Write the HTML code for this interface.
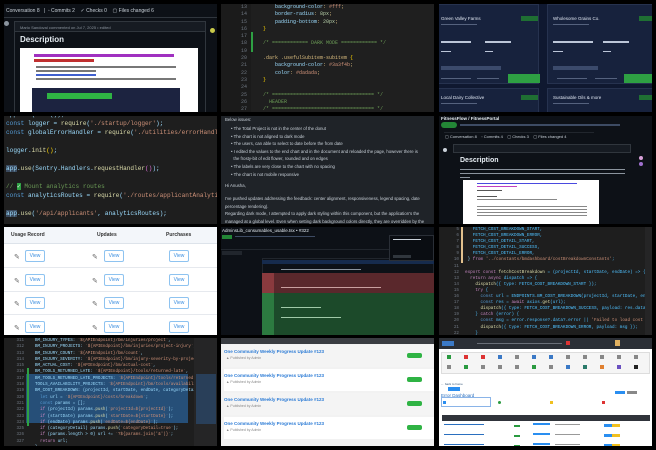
<!DOCTYPE html>
<html><head><meta charset="utf-8"><style>
*{margin:0;padding:0;box-sizing:border-box}
body{width:656px;height:450px;background:#000;position:relative;overflow:hidden;font-family:"Liberation Sans",sans-serif}
.t{position:absolute;overflow:hidden;width:213px;height:108px}
.c1{left:4px}.c2{left:221px}.c3{left:439px}
.r1{top:4px}.r2{top:116px}.r3{top:227px}.r4{top:338px;height:108px}
.a{position:absolute}
.mono{font-family:"Liberation Mono",monospace}
.ln{position:absolute;height:2px}
</style></head><body>

<!-- T1 GitHub PR -->
<div class="t c1 r1" style="background:#0d1117">
 <div class="a" style="left:0;top:0;width:213px;height:14px;border-bottom:1px solid #30363d;font-size:5px;color:#c9d1d9;line-height:14px;padding-left:2px;white-space:nowrap">Conversation 8 &nbsp;&nbsp;|&nbsp; ◦ Commits 2 &nbsp;&nbsp; ✓ Checks 0 &nbsp;&nbsp; ▢ Files changed 6</div>
 <div class="a" style="left:0;top:17px;width:5px;height:5px;border-radius:50%;background:#8b949e"></div>
 <div class="a" style="left:10px;top:17px;width:192px;height:95px;border:1px solid #30363d;background:#0d1117">
  <div style="height:10px;background:#161b22;border-bottom:1px solid #30363d;font-size:4px;color:#8b949e;padding:3px 5px">Mario Sandoval commented on Jul 7, 2025 • edited</div>
  <div style="font-size:8px;color:#e6edf3;padding:3px 5px;font-weight:bold">Description</div>
  <div class="a" style="left:5px;top:26px;width:178px;height:70px;background:#fff">
   <div class="a" style="left:14px;top:6px;width:140px;height:3px;background:#a030c0"></div>
   <div class="a" style="left:14px;top:11px;width:60px;height:3px;background:#c03030"></div>
   <div class="a" style="left:16px;top:18px;width:140px;height:2px;background:#777"></div>
   <div class="a" style="left:16px;top:22px;width:60px;height:2px;background:#777"></div>
   <div class="a" style="left:16px;top:26px;width:60px;height:2px;background:#4060d0"></div>
   <div class="a" style="left:16px;top:30px;width:140px;height:2px;background:#777"></div>
   <div class="a" style="left:12px;top:40px;width:148px;height:30px;background:#1c2340"></div>
   <div class="a" style="left:27px;top:45px;width:65px;height:6px;background:#2fb344"></div>
  </div>
 </div>
 <div class="a" style="left:206px;top:24px;width:5px;height:5px;border-radius:50%;background:#c9c94a"></div>
</div>

<!-- T2 CSS editor -->
<div class="t c2 r1 mono" style="background:#1f1f1f;font-size:5px;line-height:7.3px;color:#9cdcfe">
 <div class="a" style="left:0;top:0;width:30px;height:108px;background:#1b1b1b;color:#6e7681;text-align:right;padding-right:4px">13<br>14<br>15<br>16<br>17<br>18<br>19<br>20<br>21<br>22<br>23<br>24<br>25<br>26<br>27<br>28</div>
 <div class="a" style="left:30px;top:28px;width:2px;height:20px;background:#2ea043"></div>
 <div class="a" style="left:42px;top:0;white-space:pre;color:#d7ba7d">    <span style="color:#9cdcfe">background-color</span>: <span style="color:#ce9178">#fff</span>;
    <span style="color:#9cdcfe">border-radius</span>: <span style="color:#b5cea8">8px</span>;
    <span style="color:#9cdcfe">padding-bottom</span>: <span style="color:#b5cea8">20px</span>;
<span style="color:#ffd700">}</span>

<span style="color:#6a9955">/* ============ DARK MODE ============ */</span>

.dark .usefulSubitem-subitem <span style="color:#ffd700">{</span>
    <span style="color:#9cdcfe">background-color</span>: <span style="color:#ce9178">#3a3f4b</span>;
    <span style="color:#9cdcfe">color</span>: <span style="color:#ce9178">#dadada</span>;
<span style="color:#ffd700">}</span>

<span style="color:#6a9955">/* ================================== */</span>
  <span style="color:#6a9955">HEADER</span>
<span style="color:#6a9955">/* ================================== */</span></div>
</div>

<!-- T3 cards -->
<div class="t c3 r1" style="background:#0f1830">
 <div class="a" style="left:-4px;top:0;width:104px;height:80px;background:#17223d;border:1px solid #26324f"></div>
 <div class="a" style="left:108px;top:0;width:110px;height:80px;background:#17223d;border:1px solid #26324f"></div>
 <div class="a" style="left:-4px;top:84px;width:104px;height:30px;background:#17223d;border:1px solid #26324f"></div>
 <div class="a" style="left:108px;top:84px;width:110px;height:30px;background:#17223d;border:1px solid #26324f"></div>
 <div class="a" style="font-size:4.5px;color:#dfe6f2;left:2px;top:12px">Green Valley Farms</div>
 <div class="a" style="font-size:4.5px;color:#dfe6f2;left:114px;top:12px">Wholesome Grains Co.</div>
 <div class="a" style="font-size:4.5px;color:#dfe6f2;left:2px;top:91px">Local Dairy Collective</div>
 <div class="a" style="font-size:4.5px;color:#dfe6f2;left:114px;top:91px">Sustainable Oils &amp; more</div>
 <div class="ln" style="left:2px;top:20px;width:36px;background:#55627e;height:1px"></div>
 <div class="ln" style="left:114px;top:20px;width:36px;background:#55627e;height:1px"></div>
 <div class="ln" style="left:2px;top:99px;width:36px;background:#55627e;height:1px"></div>
 <div class="ln" style="left:114px;top:99px;width:36px;background:#55627e;height:1px"></div>
 <div class="a" style="left:82px;top:12px;width:17px;height:5px;background:#1f6f33"></div>
 <div class="a" style="left:200px;top:12px;width:17px;height:5px;background:#1f6f33"></div>
 <div class="a" style="left:82px;top:91px;width:17px;height:5px;background:#1f6f33"></div>
 <div class="a" style="left:200px;top:91px;width:17px;height:5px;background:#1f6f33"></div>
 <div class="a" style="left:69px;top:70px;width:32px;height:9px;background:#2ea043"></div>
 <div class="a" style="left:185px;top:70px;width:32px;height:9px;background:#2ea043"></div>
 <div class="ln" style="left:2px;top:74px;width:30px;background:#55627e;height:1px"></div>
 <div class="ln" style="left:38px;top:74px;width:22px;background:#55627e;height:1px"></div>
 <div class="ln" style="left:118px;top:74px;width:30px;background:#55627e;height:1px"></div>
 <div class="ln" style="left:156px;top:74px;width:22px;background:#55627e;height:1px"></div>
 <div class="ln" style="left:2px;top:37px;width:30px;background:#bcc6d8"></div>
 <div class="ln" style="left:46px;top:37px;width:26px;background:#bcc6d8"></div>
 <div class="ln" style="left:114px;top:37px;width:40px;background:#bcc6d8"></div>
 <div class="ln" style="left:164px;top:37px;width:26px;background:#bcc6d8"></div>
 <div class="ln" style="left:2px;top:47px;width:10px;background:#bcc6d8;height:1px"></div>
 <div class="ln" style="left:46px;top:47px;width:8px;background:#bcc6d8;height:1px"></div>
 <div class="ln" style="left:114px;top:47px;width:10px;background:#bcc6d8;height:1px"></div>
 <div class="ln" style="left:164px;top:47px;width:8px;background:#bcc6d8;height:1px"></div>
 <div class="ln" style="left:2px;top:62px;width:60px;background:#3b4a6b;height:4px"></div>
 <div class="ln" style="left:114px;top:62px;width:45px;background:#3b4a6b;height:4px"></div>
</div>

<!-- T4 JS code -->
<div class="t c1 r2 mono" style="background:#1e1e1e;font-size:6.1px;line-height:9px;color:#9cdcfe"><div class="a" style="left:2px;top:-6.5px;white-space:pre">app.<span style="color:#dcdcaa">use</span>(cors());
<span style="color:#569cd6">const</span> logger = <span style="color:#dcdcaa">require</span>(<span style="color:#ce9178">'./startup/logger'</span>);
<span style="color:#569cd6">const</span> globalErrorHandler = <span style="color:#dcdcaa">require</span>(<span style="color:#ce9178">'./utilities/errorHandler'</span>);

logger.<span style="color:#dcdcaa">init</span><span style="color:#ffd700">()</span>;

<span style="background:#3a4a5e">app</span>.<span style="color:#dcdcaa">use</span>(Sentry.Handlers.<span style="color:#dcdcaa">requestHandler</span><span style="color:#da70d6">()</span>);

<span style="color:#6a9955">// <span style="background:#2ea043;color:#fff">✓</span> Mount analytics routes</span>
<span style="color:#569cd6">const</span> analyticsRoutes = <span style="color:#dcdcaa">require</span>(<span style="color:#ce9178">'./routes/applicantAnalytics'</span>);

<span style="background:#3a4a5e">app</span>.<span style="color:#dcdcaa">use</span>(<span style="color:#ce9178">'/api/applicants'</span>, analyticsRoutes);</div></div>

<!-- T5 text -->
<div class="t c2 r2" style="background:#1f2328;font-size:4.3px;color:#c9d1d9;line-height:7.6px">
 <div class="a" style="left:4px;top:0">Below issues:</div>
 <div class="a" style="left:10px;top:9px;white-space:nowrap">• The Total Project is not in the center of the donut<br>• The chart is not aligned to dark mode<br>• The users, can able to select to date before the from date<br>• I edited the values to the end chart and in the document and reloaded the page, however there is<br>&nbsp;&nbsp;the frosty-bit of edit flower, rounded and on edges<br>• The labels are very close to the chart with no spacing<br>• The chart is not mobile responsive</div>
 <div class="a" style="left:4px;top:66px">Hi Anusha,</div>
 <div class="a" style="left:4px;top:79px;white-space:nowrap">I've pushed updates addressing the feedback: center alignment, responsiveness, legend spacing, date<br>percentage rendering).<br>Regarding dark mode, I attempted to apply dark styling within this component, but the application's the<br>managed at a global level. Even when setting dark background colors directly, they are overridden by the</div>
</div>

<!-- T6 GitHub PR -->
<div class="t c3 r2" style="background:#0d1117">
 <div class="a" style="left:2px;top:0;font-size:4.5px;color:#e6edf3;font-weight:bold">FitnessFlow / FitnessPortal</div>
 <div class="a" style="left:2px;top:6px;width:16px;height:6px;background:#238636;border-radius:3px"></div>
 <div class="ln" style="left:21px;top:8px;width:160px;background:#3d4b63"></div>
 <div class="a" style="left:5px;top:16px;width:150px;height:0;border-top:1px solid #21262d"></div>
 <div class="a" style="left:6px;top:18px;font-size:4px;color:#c9d1d9;white-space:nowrap">▢ Conversation 8 &nbsp;&nbsp; ◦ Commits 4 &nbsp;&nbsp; ▢ Checks 3 &nbsp;&nbsp; ▢ Files changed 4</div>
 <div class="a" style="left:4px;top:32px;width:4px;height:4px;background:#c9d1d9;border-radius:50%"></div>
 <div class="a" style="left:14px;top:28px;width:178px;height:9px;background:#161b22;border:1px solid #30363d"></div>
 <div class="a" style="left:21px;top:41px;font-size:7px;color:#e6edf3;font-weight:bold">Description</div>
 <div class="ln" style="left:21px;top:53px;width:165px;background:#8b949e;height:1px"></div>
 <div class="ln" style="left:21px;top:57px;width:165px;background:#8b949e;height:1px"></div>
 <div class="ln" style="left:21px;top:61px;width:10px;background:#8b949e;height:1px"></div>
 <div class="a" style="left:24px;top:64px;width:136px;height:44px;background:#fff">
  <div class="ln" style="left:14px;top:3px;width:100px;background:#4a4adf;height:1px"></div>
  <div class="ln" style="left:14px;top:6px;width:40px;background:#c040c0;height:1px"></div>
  <div class="ln" style="left:14px;top:10px;width:25px;background:#555;height:1px"></div>
  <div class="ln" style="left:14px;top:16px;width:20px;background:#555;height:1px"></div>
  <div class="ln" style="left:14px;top:19px;width:80px;background:#888;height:1px"></div>
  <div class="ln" style="left:14px;top:26px;width:110px;background:#888;height:1px"></div>
  <div class="ln" style="left:14px;top:29px;width:110px;background:#888;height:1px"></div>
  <div class="ln" style="left:14px;top:32px;width:110px;background:#888;height:1px"></div>
  <div class="ln" style="left:14px;top:35px;width:110px;background:#888;height:1px"></div>
 </div>
 <div class="a" style="left:200px;top:40px;width:4px;height:4px;background:#d8a0d8;border-radius:50%"></div>
 <div class="a" style="left:200px;top:46px;width:4px;height:4px;background:#a070d0;border-radius:50%"></div>
</div>

<!-- T7 table -->
<div class="t c1 r3" style="background:#fff;font-size:5px;color:#333">
 <div class="a" style="left:0;top:0;width:213px;height:17px;background:#f3f6fa;border-bottom:1px solid #dde3ea;font-weight:bold">
  <span class="a" style="left:7px;top:5px">Usage Record</span><span class="a" style="left:93px;top:5px">Updates</span><span class="a" style="left:162px;top:5px">Purchases</span>
 </div>
 <div id="rows"></div>
</div>

<!-- T8 diff -->
<div class="t c2 r3" style="background:#0d1117">
 <div class="a" style="left:1px;top:1px;font-size:4.5px;color:#e6edf3">AdminsLib_consumables_usable.tsx • #322</div>
 <div class="a" style="left:1px;top:8px;width:10px;height:4px;background:#238636"></div>
 <div class="ln" style="left:14px;top:9px;width:80px;background:#3d4b63;height:1px"></div>
 <div class="a" style="left:0;top:22px;width:213px;height:0;border-top:1px solid #21262d"></div>
 <div class="a" style="left:1px;top:24px;width:20px;height:4px;background:#21262d"></div>
 <div class="a" style="left:41px;top:31px;width:172px;height:77px;border:1px solid #21262d"></div>
 <div class="a" style="left:41px;top:33px;width:172px;height:4px;background:#162b4d"></div>
 <div class="a" style="left:41px;top:46px;width:172px;height:20px;background:#5a282c"></div>
 <div class="a" style="left:41px;top:46px;width:12px;height:20px;background:#8a3a3e"></div>
 <div class="a" style="left:41px;top:66px;width:172px;height:42px;background:#1c4a2a"></div>
 <div class="a" style="left:41px;top:66px;width:12px;height:42px;background:#2c7a40"></div>
 <div class="ln" style="left:60px;top:42px;width:80px;background:#8b949e;height:1px"></div>
 <div class="ln" style="left:60px;top:60px;width:100px;background:#c9a0a0;height:1px"></div>
 <div class="ln" style="left:60px;top:80px;width:40px;background:#a0c9a8;height:1px"></div>
 <div class="ln" style="left:60px;top:90px;width:60px;background:#a0c9a8;height:1px"></div>
 <div class="a" style="left:168px;top:8px;width:45px;height:26px;background:#0a0d12;border:1px solid #2a2f37"></div>
 <div class="ln" style="left:172px;top:12px;width:28px;background:#c9d1d9;height:1px"></div>
 <div class="ln" style="left:172px;top:28px;width:18px;background:#30363d;height:3px"></div>
</div>

<!-- T9 VS Code JS -->
<div class="t c3 r3 mono" style="background:#1e1e1e;font-size:4.3px;line-height:6.1px;color:#9cdcfe">
 <div class="a" style="left:0;top:0;width:20px;height:108px;color:#6e7681;text-align:right;white-space:pre">5
6
7
8
9
10
11
12
13
14
15
16
17
18
19
20
21
22</div>
 <div class="a" style="left:22px;top:0;width:2px;height:36px;background:#e2c08d"></div>
 <div class="a" style="left:26px;top:0;white-space:pre;color:#4fc1ff">   FETCH_COST_BREAKDOWN_START,
   FETCH_COST_BREAKDOWN_ERROR,
   FETCH_COST_DETAIL_START,
   FETCH_COST_DETAIL_SUCCESS,
   FETCH_COST_DETAIL_ERROR,
 <span style="color:#9cdcfe">} </span><span style="color:#c586c0">from</span> <span style="color:#ce9178">'../constants/bmdashboard/costBreakdownConstants'</span>;

<span style="color:#c586c0">export const</span> <span style="color:#dcdcaa">fetchCostBreakdown</span> = (projectId, startDate, endDate) =&gt; {
  <span style="color:#c586c0">return async</span> dispatch =&gt; {
    <span style="color:#dcdcaa">dispatch</span>({ type: FETCH_COST_BREAKDOWN_START });
    <span style="color:#c586c0">try</span> {
      <span style="color:#569cd6">const</span> url = ENDPOINTS.BM_COST_BREAKDOWN(projectId, startDate, endDate);
      <span style="color:#569cd6">const</span> res = <span style="color:#c586c0">await</span> axios.<span style="color:#dcdcaa">get</span>(url);
      <span style="color:#dcdcaa">dispatch</span>({ type: FETCH_COST_BREAKDOWN_SUCCESS, payload: res.data });
    } <span style="color:#c586c0">catch</span> (error) {
      <span style="color:#569cd6">const</span> msg = error.response?.data?.error || <span style="color:#ce9178">'Failed to load cost breakdown'</span>;
      <span style="color:#dcdcaa">dispatch</span>({ type: FETCH_COST_BREAKDOWN_ERROR, payload: msg });
    }
  };
};</div>
 <div class="a" style="left:206px;top:0;width:7px;height:108px;background:#252526"></div>
</div>

<!-- T10 code with selection -->
<div class="t c1 r4 mono" style="background:#1e1e1e;font-size:4.2px;line-height:6.3px;color:#9cdcfe">
 <div class="a" style="left:0;top:0;width:20px;height:108px;color:#6e7681;text-align:right;white-space:pre">311
312
313
314
315
316
317
318
319
320
321
322
323
324
325
326
327
328
329
330</div>
 <div class="a" style="left:22px;top:36px;width:162px;height:49px;background:#264f78"></div>
 <div class="a" style="left:23px;top:30px;width:2px;height:58px;background:#2ea043"></div>
 <div class="a" style="left:26px;top:0;white-space:pre">  BM_INJURY_TYPES: <span style="color:#ce9178">`${APIEndpoint}/bm/injuries/project`</span>,
  BM_INJURY_PROJECTS: <span style="color:#ce9178">`${APIEndpoint}/bm/injuries/project-injury`</span>,
  BM_INJURY_COUNT: <span style="color:#ce9178">`${APIEndpoint}/bm/count`</span>,
  BM_INJURY_SEVERITY: <span style="color:#ce9178">`${APIEndpoint}/bm/injury-severity-by-project`</span>,
  BM_ACTUAL_COST: <span style="color:#ce9178">`${APIEndpoint}/bm/actual-cost`</span>,
  BM_TOOLS_RETURNED_LATE: <span style="color:#ce9178">`${APIEndpoint}/tools/returned-late`</span>,
  BM_TOOLS_RETURNED_LATE_PROJECTS: <span style="color:#ce9178">`${APIEndpoint}/tools/returned-late/projects`</span>,
  TOOLS_AVAILABILITY_PROJECTS: <span style="color:#ce9178">`${APIEndpoint}/bm/tools/availability`</span>,
  BM_COST_BREAKDOWN: (projectId, startDate, endDate, categoryDetail) =&gt; {
    <span style="color:#569cd6">let</span> url = <span style="color:#ce9178">`${APIEndpoint}/costs/breakdown`</span>;
    <span style="color:#569cd6">const</span> params = [];
    <span style="color:#c586c0">if</span> (projectId) params.<span style="color:#dcdcaa">push</span>(<span style="color:#ce9178">`projectId=${projectId}`</span>);
    <span style="color:#c586c0">if</span> (startDate) params.<span style="color:#dcdcaa">push</span>(<span style="color:#ce9178">`startDate=${startDate}`</span>);
    <span style="color:#c586c0">if</span> (endDate) params.<span style="color:#dcdcaa">push</span>(<span style="color:#ce9178">`endDate=${endDate}`</span>);
    <span style="color:#c586c0">if</span> (categoryDetail) params.<span style="color:#dcdcaa">push</span>(<span style="color:#ce9178">`categoryDetail=true`</span>);
    <span style="color:#c586c0">if</span> (params.length &gt; 0) url += <span style="color:#ce9178">`?${params.join('&amp;')}`</span>;
    <span style="color:#c586c0">return</span> url;
  },
  TOOLS_AVAILABILITY_BY_PROJECT: (projectId, startDate, endDate) =&gt; {
    <span style="color:#569cd6">let</span> url = <span style="color:#ce9178">`${APIEndpoint}/tools/availability`</span>;</div>
 <div class="a" style="left:190px;top:0;width:23px;height:108px;background:#252526"></div>
 <div class="a" style="left:192px;top:36px;width:20px;height:50px;background:#2b4a6f;opacity:.7"></div>
</div>

<!-- T11 list -->
<div class="t c2 r4" style="background:#f2f2f2">
 <div class="a" style="left:0;top:0;width:213px;height:6px;background:#3a3d42"></div>
 <div id="t11"></div>
</div>

<!-- T12 admin -->
<div class="t c3 r4" style="background:#fff">
 <div class="a" style="left:0;top:0;width:213px;height:11px;background:#2b2f36"></div>
 <div class="a" style="left:3px;top:3px;width:12px;height:5px;background:#3b79c6"></div>
 <div class="ln" style="left:38px;top:5px;width:85px;background:#6a6f78;height:1px"></div>
 <div class="a" style="left:127px;top:3px;width:4px;height:4px;background:#d33"></div>
 <div class="a" style="left:176px;top:2px;width:5px;height:6px;background:#e0b060"></div>
 <div class="a" style="left:2px;top:14px;width:209px;height:22px;background:#f5f5f5;border:1px solid #ddd"></div>
 <div id="icons"></div>
 <div class="a" style="left:2px;top:44px;font-size:3px;color:#357">← back to home</div>
 <div class="a" style="left:9px;top:49px;width:12px;height:4px;background:#2a8ef0"></div>
 <div class="a" style="left:2px;top:55px;font-size:4.5px;color:#2a6fbf">Error Dashboard</div>
 <div class="a" style="left:176px;top:53px;width:10px;height:3px;background:#2a8ef0"></div>
 <div class="a" style="left:188px;top:53px;width:10px;height:3px;background:#888"></div>
 <div class="a" style="left:2px;top:59px;width:50px;height:10px;border:1px solid #8ab4e8"></div>
 <div class="a" style="left:4px;top:63px;width:3px;height:3px;background:#2a8ef0"></div>
 <div class="a" style="left:59px;top:63px;width:3px;height:3px;background:#2a9a40;border-radius:50%"></div>
 <div class="a" style="left:111px;top:63px;width:3px;height:3px;background:#f0c020"></div>
 <div class="a" style="left:163px;top:63px;width:3px;height:3px;background:#d33"></div>
 <div class="a" style="left:3px;top:77px;width:208px;height:6px;background:#30343b"></div>
 <div id="t12r"></div>
</div>

<script>
(function(){
 var h='';
 for(var i=0;i<4;i++){var y=18+i*23.5;
  h+='<div class="a" style="left:0;top:'+(y+22)+'px;width:213px;height:1px;background:#e6e9ee"></div>';
  [[10,21],[88,100],[null,165]].forEach(function(p){
   if(p[0]!==null)h+='<div class="a" style="left:'+p[0]+'px;top:'+(y+8)+'px;font-size:7px;color:#666">✎</div>';
   h+='<div class="a" style="left:'+p[1]+'px;top:'+(y+5)+'px;width:20px;height:12px;border:1px solid #8ec3f0;border-radius:2px;font-size:5px;color:#3a8ee0;text-align:center;line-height:10px">View</div>';
  });}
 document.getElementById('rows').innerHTML=h;
 h='';
 for(var i=0;i<4;i++){var y=10+i*24;
  h+='<div class="a" style="left:3px;top:'+(y-3)+'px;width:210px;height:22px;background:'+(i%2?'#fff':'#f4f4f4')+'"></div>';
  h+='<div class="a" style="left:3px;top:'+(y+1)+'px;font-size:4.5px;color:#2a7ad5;font-weight:bold;white-space:nowrap">One Community Weekly Progress Update #123</div>';
  h+='<div class="a" style="left:5px;top:'+(y+8)+'px;font-size:3.5px;color:#888">▲ Published by Admin</div>';
  h+='<div class="a" style="left:186px;top:'+(y+5)+'px;width:15px;height:5px;background:#2fb344;border-radius:2px"></div>';}
 document.getElementById('t11').innerHTML=h;
 h='';var cols=['#2a9a40','#d33','#d33','#3b79c6','#888','#3b79c6','#3b79c6','#888','#888','#888','#888','#888'];
 for(var i=0;i<12;i++){h+='<div class="a" style="left:'+(8+i*17)+'px;top:17px;width:4px;height:4px;background:'+cols[i]+'"></div>';
  h+='<div class="a" style="left:'+(8+i*17)+'px;top:27px;width:4px;height:4px;background:'+['#888','#2a9a40','#888','#888','#888','#2a9a40','#888','#3b79c6','#2a7a6a','#e08030','#6a50c0','#222'][i]+'"></div>';}
 document.getElementById('icons').innerHTML=h;
 h='';
 for(var i=0;i<3;i++){var y=86+i*10;
  h+='<div class="ln" style="left:5px;top:'+y+'px;width:40px;background:#2a6fbf;height:1px"></div>';
  h+='<div class="a" style="left:75px;top:'+(y+1)+'px;width:6px;height:2px;background:#2a9a40"></div>';
  h+='<div class="a" style="left:94px;top:'+(y-1)+'px;width:17px;height:2px;background:#2a8ef0"></div>';
  h+='<div class="ln" style="left:116px;top:'+y+'px;width:25px;background:#999;height:1px"></div>';
  h+='<div class="a" style="left:165px;top:'+y+'px;width:8px;height:3px;background:#2a8ef0"></div><div class="a" style="left:173px;top:'+y+'px;width:8px;height:3px;background:#f0c020"></div>';}
 document.getElementById('t12r').innerHTML=h;
})();
</script>
</body></html>
